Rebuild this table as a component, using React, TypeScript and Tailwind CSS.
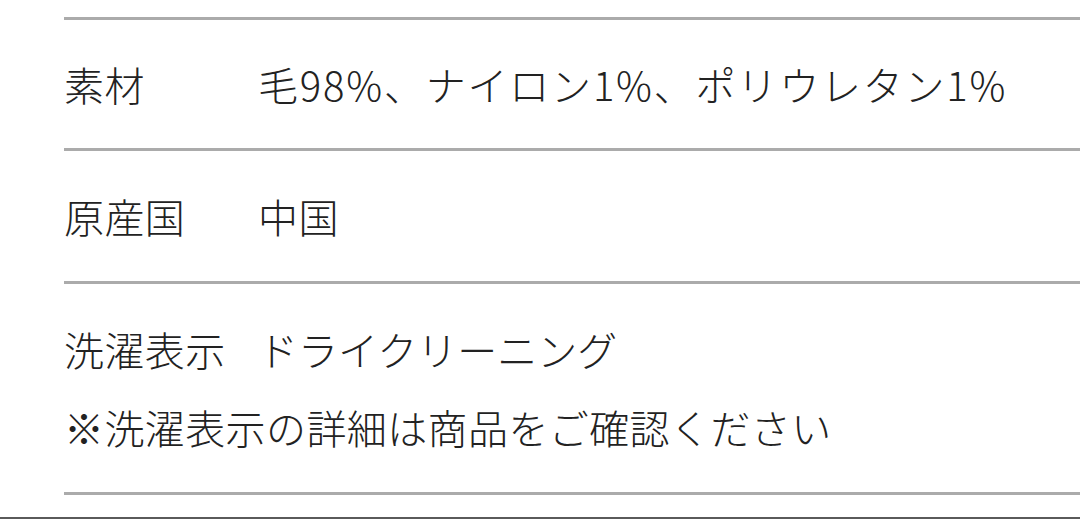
export default function App(): React.ReactElement {
  const font = { fontFamily: '"Noto Sans CJK JP", "Noto Sans", sans-serif' }
  return (
    <div className="w-[1080px] h-[519px] overflow-hidden bg-white relative" style={font}>
      <div className="pt-[17px] pl-[64px] text-[40px] font-light leading-[78px] tracking-[0.01em] text-[#222]">
        {/* 素材 */}
        <div className="flex border-t-[3px] border-[#ababab] py-[25px]">
          <div className="w-[194px] shrink-0">素材</div>
          <div className="tracking-[0.045em]">毛98%、ナイロン1%、ポリウレタン1%</div>
        </div>

        {/* 原産国 */}
        <div className="flex border-t-[3px] border-[#ababab] py-[26px]">
          <div className="w-[194px] shrink-0">原産国</div>
          <div>中国</div>
        </div>

        {/* 洗濯表示 */}
        <div className="border-y-[3px] border-[#ababab] py-[26px]">
          <div className="flex">
            <div className="w-[194px] shrink-0">洗濯表示</div>
            <div className="tracking-normal">ドライクリーニング</div>
          </div>
          <div>※洗濯表示の詳細は商品をご確認ください</div>
        </div>
      </div>
      <div className="absolute left-0 right-0 top-[517px] h-[2px] bg-[#5a5a5a]" />
    </div>
  )
}
